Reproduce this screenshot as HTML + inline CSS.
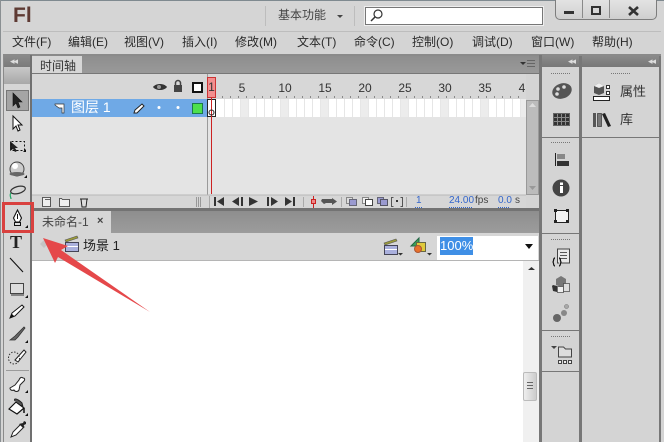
<!DOCTYPE html>
<html><head><meta charset="utf-8">
<style>
html,body{margin:0;padding:0}
body{width:664px;height:442px;overflow:hidden;position:relative;background:#d4d4d4;font-family:"Liberation Sans","WenQuanYi Zen Hei","Noto Sans CJK SC",sans-serif;font-size:12px;color:#222}
.a{position:absolute}
.t{position:absolute;white-space:nowrap;line-height:14px}
svg{position:absolute;left:0;top:0}
.m{top:35px;font-size:12px;color:#2a2a2a}
.r{top:81px;font-size:12px;color:#333;transform:translateX(-50%)}
</style></head><body>
<div class="a" style="left:0;top:0;width:664px;height:31px;background:#d5d5d5"></div>
<div class="a" style="left:0;top:0;width:664px;height:1px;background:#7f8a90"></div>
<div class="a" style="left:0;top:0;width:1px;height:442px;background:#8a8f92"></div>
<div class="a" style="left:3px;top:31px;width:658px;height:1px;background:#bdbdbd"></div>
<div class="a" style="left:3px;top:54px;width:658px;height:2px;background:#8a8a8a"></div>
<div class="a" style="left:265px;top:6px;width:1px;height:20px;background:#bdbdbd"></div>
<div class="a" style="left:354px;top:6px;width:1px;height:20px;background:#bdbdbd"></div>
<div class="t" style="left:13px;top:4px;font-size:21px;line-height:24px;font-weight:bold;color:#5e3a33">Fl</div>
<div class="t" style="left:278px;top:8px;color:#444">基本功能</div>
<div class="a" style="left:337px;top:15px;width:0;height:0;border:3px solid transparent;border-top:3px solid #444"></div>
<div class="a" style="left:365px;top:7px;width:176px;height:16px;background:#fff;border:1px solid #777;box-shadow:0 0 0 1px #eee"></div>
<svg width="664" height="442" style="z-index:1"><circle cx="378" cy="14" r="4" fill="none" stroke="#333" stroke-width="1.2"/><path d="M375 17l-4 4" stroke="#333" stroke-width="1.5"/></svg>
<div class="a" style="left:555px;top:-2px;width:100px;height:20px;background:linear-gradient(#e4e4e4,#cfcfcf);border:1px solid #7d7d7d;border-radius:0 0 5px 5px"></div>
<div class="a" style="left:582px;top:0;width:1px;height:18px;background:#8a8a8a"></div>
<div class="a" style="left:609px;top:0;width:1px;height:18px;background:#8a8a8a"></div>
<div class="a" style="left:564px;top:11px;width:10px;height:3px;background:#333"></div>
<div class="a" style="left:591px;top:6px;width:6px;height:5px;border:2px solid #333"></div>
<svg width="664" height="442" style="z-index:1"><path d="M629 7l9 8M638 7l-9 8" stroke="#333" stroke-width="2.600"/></svg>

<div class="t m" style="left:12px">文件(F)</div>
<div class="t m" style="left:68px">编辑(E)</div>
<div class="t m" style="left:124px">视图(V)</div>
<div class="t m" style="left:182px">插入(I)</div>
<div class="t m" style="left:235px">修改(M)</div>
<div class="t m" style="left:297px">文本(T)</div>
<div class="t m" style="left:354px">命令(C)</div>
<div class="t m" style="left:412px">控制(O)</div>
<div class="t m" style="left:472px">调试(D)</div>
<div class="t m" style="left:531px">窗口(W)</div>
<div class="t m" style="left:592px">帮助(H)</div>

<!-- toolbar -->
<div class="a" style="left:3px;top:55px;width:1px;height:387px;background:#8a8a8a"></div>
<div class="a" style="left:4px;top:56px;width:26px;height:11px;background:linear-gradient(#8a8a8a,#7a7a7a)"></div>
<div class="a" style="left:4px;top:67px;width:26px;height:17px;background:linear-gradient(#c8c8c8,#a8a8a8)"></div>
<div class="a" style="left:4px;top:84px;width:26px;height:358px;background:#d6d6d6"></div>
<div class="a" style="left:30px;top:55px;width:2px;height:387px;background:#707070"></div>
<div class="t" style="left:10px;top:55px;font-size:9px;color:#ddd;line-height:12px;letter-spacing:-1px">◂◂</div>
<div class="a" style="left:6px;top:90px;width:21px;height:19px;background:#a5a5a5;border:1px solid #777"></div>
<div class="a" style="left:6px;top:370px;width:23px;height:1px;background:#9b9b9b"></div>

<!-- timeline -->
<div class="a" style="left:32px;top:56px;width:507px;height:17px;background:linear-gradient(#8e8e8e,#999)"></div>
<div class="a" style="left:32px;top:56px;width:50px;height:17px;background:#d6d6d6"></div>
<div class="t" style="left:40px;top:59px;color:#333">时间轴</div>
<div class="a" style="left:32px;top:73px;width:507px;height:1px;background:#777"></div>
<div class="a" style="left:32px;top:74px;width:494px;height:25px;background:#d7d7d7"></div>
<div class="a" style="left:32px;top:99px;width:175px;height:18px;background:#6fa9e6"></div>
<div class="a" style="left:32px;top:117px;width:494px;height:78px;background:#e4e4e4"></div>
<div class="a" style="left:207px;top:74px;width:1px;height:122px;background:#9a9a9a"></div>
<div class="a" style="left:208px;top:99px;width:318px;height:18px;background:#fff"></div>
<div class="t" style="left:71px;top:100px;color:#fff;font-size:14px;line-height:15px">图层 1</div>
<div class="t r" style="left:242px">5</div>
<div class="t r" style="left:285px">10</div>
<div class="t r" style="left:325px">15</div>
<div class="t r" style="left:365px">20</div>
<div class="t r" style="left:405px">25</div>
<div class="t r" style="left:445px">30</div>
<div class="t r" style="left:485px">35</div>
<div class="t r" style="left:522px">4</div>

<svg width="664" height="442" style="z-index:2">
<!-- frame cells -->
<g fill="#ececec"><rect x="240" y="99" width="8" height="18"/><rect x="280" y="99" width="8" height="18"/><rect x="320" y="99" width="8" height="18"/><rect x="360" y="99" width="8" height="18"/><rect x="400" y="99" width="8" height="18"/><rect x="440" y="99" width="8" height="18"/><rect x="480" y="99" width="8" height="18"/><rect x="520" y="99" width="6" height="18"/></g>
<path d="M224.500 99v18M232.500 99v18M240.500 99v18M248.500 99v18M256.500 99v18M264.500 99v18M272.500 99v18M280.500 99v18M288.500 99v18M296.500 99v18M304.500 99v18M312.500 99v18M320.500 99v18M328.500 99v18M336.500 99v18M344.500 99v18M352.500 99v18M360.500 99v18M368.500 99v18M376.500 99v18M384.500 99v18M392.500 99v18M400.500 99v18M408.500 99v18M416.500 99v18M424.500 99v18M432.500 99v18M440.500 99v18M448.500 99v18M456.500 99v18M464.500 99v18M472.500 99v18M480.500 99v18M488.500 99v18M496.500 99v18M504.500 99v18M512.500 99v18M520.500 99v18" stroke="#e6e6e6" stroke-width="1"/>
<path d="M222.500 96v2M230.500 96v2M238.500 96v2M246.500 96v2M254.500 96v2M262.500 96v2M270.500 96v2M278.500 96v2M286.500 96v2M294.500 96v2M302.500 96v2M310.500 96v2M318.500 96v2M326.500 96v2M334.500 96v2M342.500 96v2M350.500 96v2M358.500 96v2M366.500 96v2M374.500 96v2M382.500 96v2M390.500 96v2M398.500 96v2M406.500 96v2M414.500 96v2M422.500 96v2M430.500 96v2M438.500 96v2M446.500 96v2M454.500 96v2M462.500 96v2M470.500 96v2M478.500 96v2M486.500 96v2M494.500 96v2M502.500 96v2M510.500 96v2M518.500 96v2" stroke="#888"/>
<rect x="207.500" y="99.500" width="8" height="17" fill="#fff" stroke="#222"/>
<!-- playhead -->
<rect x="207.500" y="77.500" width="8" height="20" fill="#f28f8f" stroke="#c33"/>
<text x="211.500" y="91" font-size="12" text-anchor="middle" fill="#333" font-family="Liberation Sans">1</text>
<path d="M211.500 98V194" stroke="#c22" stroke-width="1"/>
<circle cx="211.500" cy="112.500" r="2.500" fill="none" stroke="#222"/>
<!-- header icons -->
<path d="M153 87c3-4 11-4 14 0c-3 4-11 4-14 0z" fill="#333"/><circle cx="159" cy="87" r="2" fill="#999"/>
<rect x="174" y="85" width="8" height="7" fill="#444"/><path d="M175.500 85v-2a2.500 2.500 0 0 1 5 0v2" fill="none" stroke="#444" stroke-width="1.500"/>
<rect x="193" y="83" width="9" height="9" fill="#fff" stroke="#111" stroke-width="2"/>
<!-- layer row icons -->
<path d="M55 104h9v9h-2v-5h-3l-4-3z" fill="#fff" stroke="#333" stroke-width=".7"/>
<path d="M134 113l1-3 7-6 2 2-7 7z" fill="#fff" stroke="#222"/>
<circle cx="159" cy="107.500" r="1.500" fill="#fff"/><circle cx="178" cy="107.500" r="1.500" fill="#fff"/>
<rect x="192.500" y="103.500" width="10" height="10" fill="#4de04d" stroke="#1a7a4a"/>
<!-- timeline menu -->
<path d="M520 62h6l-3 3z" fill="#333"/><path d="M527 60.500h8M527 63.500h8M527 66.500h8" stroke="#666"/>
<!-- timeline bottom -->
<rect x="32" y="195" width="494" height="13" fill="#d6d6d6"/>
<path d="M32 195h494" stroke="#b8b8b8"/>
<path d="M42.500 197.500h8v9h-8zM45 199.500h5" fill="#eee" stroke="#333" stroke-width=".8"/>
<path d="M59.500 198.500h2l1 1h7v7h-10z" fill="#f0f0f0" stroke="#333" stroke-width=".8"/>
<path d="M80 199h8M81 199l1 8h4l1-8" fill="#ddd" stroke="#222"/>
<path d="M196.500 197v10M198.500 197v10M200.500 197v10" stroke="#999"/><path d="M209.500 196v12" stroke="#aaa"/>
<g fill="#333"><path d="M214 197h2v9h-2zM224 197v9l-7-4.500z"/><path d="M239 197v9l-7-4.500zM241 197h2v9h-2z"/><path d="M249 197l9 4.500-9 4.500z"/><path d="M267 197h2v9h-2zM271 197l7 4.500-7 4.500z"/><path d="M285 197l7 4.500-7 4.500zM293 197h2v9h-2z"/></g>
<path d="M303.500 197v10M341.500 197v10M406.500 197v10" stroke="#aaa"/>
<path d="M313.500 196v12" stroke="#c22"/><rect x="311.500" y="199.500" width="4" height="4" fill="#e88" stroke="#c22"/>
<path d="M322 199h10v-1l5 3.500-5 3.500v-2h-6l-2 1-3-3z" fill="#555"/>
<rect x="346.500" y="197.500" width="6" height="6" fill="#ddd" stroke="#888"/><rect x="349.500" y="199.500" width="7" height="6" fill="#9a9ad0" stroke="#667"/>
<rect x="362.500" y="197.500" width="6" height="6" fill="#eee" stroke="#888"/><rect x="365.500" y="199.500" width="7" height="6" fill="#fff" stroke="#444"/>
<rect x="377.500" y="197.500" width="6" height="6" fill="#9a9ad0" stroke="#667"/><rect x="380.500" y="199.500" width="7" height="6" fill="#9a9ad0" stroke="#556"/>
<path d="M393.500 197.500h-2v9h2M400.500 197.500h2v9h-2" fill="none" stroke="#555"/><rect x="396" y="200" width="2" height="2" fill="#333"/>
<path d="M415 207.500h7M449 207.500h24M498 207.500h12" stroke="#36c" stroke-dasharray="1 1"/>
<!-- timeline scrollbar -->
<rect x="526.500" y="100.500" width="12" height="94" fill="#bcbcbc" stroke="#999"/>
<path d="M529 107h7l-3.500-4z" fill="#ddd"/><path d="M529 186h7l-3.500 4z" fill="#999"/>
</svg>
<div class="t" style="left:416px;top:195px;font-size:10px;line-height:12px;color:#36c;z-index:3">1</div>
<div class="t" style="left:449px;top:195px;font-size:10px;line-height:12px;color:#36c;z-index:3">24.00</div>
<div class="t" style="left:475px;top:195px;font-size:10px;line-height:12px;color:#444;z-index:3">fps</div>
<div class="t" style="left:498px;top:195px;font-size:10px;line-height:12px;color:#36c;z-index:3">0.0</div>
<div class="t" style="left:515px;top:195px;font-size:10px;line-height:12px;color:#444;z-index:3">s</div>

<!-- document -->
<div class="a" style="left:32px;top:208px;width:507px;height:3px;background:#737373"></div>
<div class="a" style="left:32px;top:211px;width:507px;height:22px;background:linear-gradient(#8e8e8e,#9c9c9c)"></div>
<div class="a" style="left:32px;top:211px;width:79px;height:22px;background:#d6d6d6"></div>
<div class="t" style="left:42px;top:215px;color:#444">未命名-1</div>
<div class="t" style="left:97px;top:214px;font-size:11px;color:#444;font-weight:bold">×</div>
<div class="a" style="left:32px;top:233px;width:507px;height:27px;background:#d6d6d6"></div>
<div class="a" style="left:32px;top:260px;width:507px;height:2px;background:#b5b5b5"></div>
<div class="a" style="left:32px;top:261px;width:491px;height:181px;background:#fff"></div>
<div class="a" style="left:523px;top:261px;width:16px;height:181px;background:#f0f0f0"></div>
<div class="a" style="left:523px;top:372px;width:12px;height:27px;background:linear-gradient(90deg,#eee,#ccc);border:1px solid #bbb;border-radius:2px"></div>
<div class="t" style="left:83px;top:239px;font-size:13px;color:#222">场景 1</div>
<div class="a" style="left:437px;top:236px;width:101px;height:24px;background:#fff"></div>
<div class="t" style="left:440px;top:237px;height:18px;line-height:18px;font-size:13px;background:#3f8fe6;color:#fff">100%</div>
<div class="a" style="left:525px;top:244px;width:0;height:0;border:4px solid transparent;border-top:5px solid #111"></div>

<!-- right panels -->
<div class="a" style="left:539px;top:55px;width:3px;height:387px;background:#777"></div>
<div class="a" style="left:542px;top:56px;width:118px;height:11px;background:linear-gradient(#8a8a8a,#777)"></div>
<div class="a" style="left:579px;top:56px;width:3px;height:386px;background:#777"></div>
<div class="a" style="left:659px;top:56px;width:2px;height:386px;background:#777"></div>
<div class="a" style="left:542px;top:137px;width:118px;height:1px;background:#777"></div>
<div class="a" style="left:542px;top:233px;width:37px;height:1px;background:#777"></div>
<div class="a" style="left:542px;top:330px;width:37px;height:1px;background:#777"></div>
<div class="a" style="left:542px;top:371px;width:37px;height:1px;background:#777"></div>
<div class="t" style="left:620px;top:85px;font-size:13px;color:#333;z-index:3">属性</div>
<div class="t" style="left:620px;top:113px;font-size:13px;color:#333;z-index:3">库</div>
<div class="t" style="left:568px;top:55px;font-size:9px;line-height:12px;color:#ddd;letter-spacing:-1px">◂◂</div>
<div class="t" style="left:648px;top:55px;font-size:9px;line-height:12px;color:#ddd;letter-spacing:-1px">◂◂</div>

<svg width="664" height="442" style="z-index:4">
<!-- grips -->
<g stroke="#777" stroke-dasharray="1 1"><path d="M551 73.500h20M611 73.500h20M551 142.500h20M551 239.500h20M551 336.500h20"/></g>
<!-- palette -->
<ellipse cx="562" cy="91" rx="10" ry="7.500" fill="#555" transform="rotate(-20 562 91)"/><circle cx="558" cy="89" r="1.800" fill="#ddd"/><circle cx="564" cy="87" r="1.800" fill="#ddd"/><circle cx="557" cy="94" r="1.800" fill="#ddd"/>
<!-- swatches -->
<rect x="553.500" y="113.500" width="16" height="12" fill="#333" stroke="#666"/><path d="M557.500 114v11M561.500 114v11M565.500 114v11M554 117.500h15M554 121.500h15" stroke="#8a8a8a"/>
<!-- align -->
<path d="M555.500 153v13" stroke="#222"/><rect x="557" y="154" width="8" height="5" fill="#888"/><rect x="557" y="161" width="12" height="5" fill="#333"/>
<!-- info -->
<circle cx="561" cy="188" r="8.500" fill="#444"/><rect x="560" y="186" width="3" height="7" fill="#fff"/><rect x="560" y="182.500" width="3" height="2.500" fill="#fff"/>
<!-- transform -->
<rect x="555.500" y="210.500" width="13" height="12" fill="#f3f3f3" stroke="#222"/><g fill="#222"><rect x="554" y="209" width="3" height="3"/><rect x="566" y="209" width="3" height="3"/><rect x="554" y="220" width="3" height="3"/><rect x="566" y="220" width="3" height="3"/></g>
<!-- actions -->
<rect x="557.500" y="249" width="12" height="14" fill="#e8e8e8" stroke="#444"/><path d="M560 252.500h7M560 255.500h7M560 258.500h7" stroke="#555"/>
<path d="M555 258c-2 0-1 3-2 4c1 1 0 4 2 4M559 258c2 0 1 3 2 4c-1 1 0 4-2 4" fill="#d6d6d6" stroke="#111" stroke-width="1.200"/>
<!-- components -->
<path d="M556 279l5-3 5 3v6l-5 2-5-2z" fill="#777"/><path d="M553 285l4 1v6l-4-1-1-5z" fill="#333"/><rect x="557.500" y="286.500" width="6" height="6" fill="#eee" stroke="#444" stroke-width=".7"/><rect x="563.500" y="283.500" width="6" height="8" fill="#ddd" stroke="#444" stroke-width=".7"/>
<!-- dots -->
<circle cx="557" cy="318" r="4" fill="#666"/><circle cx="564" cy="313" r="3" fill="#888"/><circle cx="566.500" cy="306.500" r="2" fill="#aaa" stroke="#777" stroke-width=".6"/>
<!-- project -->
<path d="M551 346h6l-3 3z" fill="#444"/><path d="M558.500 347h5l2 2h6v8h-13z" fill="#ddd" stroke="#444"/><path d="M558.500 360.500h3v3h-3zM563.500 360.500h3v3h-3zM568.500 360.500h3v3h-3z" fill="#eee" stroke="#444"/>
<!-- props icon -->
<path d="M594 86l5-3 5 3v7l-5 2-5-2z" fill="#555"/><path d="M594 86l5 2 5-2-5-3z" fill="#eee"/>
<rect x="606.500" y="85.500" width="3" height="3" fill="#fff" stroke="#333"/><rect x="606.500" y="91.500" width="3" height="3" fill="#fff" stroke="#333"/>
<rect x="593.500" y="96.500" width="16" height="4" fill="#fff" stroke="#222"/>
<!-- library icon -->
<rect x="593" y="113" width="3" height="14" fill="#555"/><rect x="597.500" y="113.500" width="4" height="13" fill="#777" stroke="#222" stroke-width=".6"/><path d="M602 114l3-1 6 13-3 1z" fill="#222"/>
<!-- tools -->
<path d="M13 93v13l3-3 2 5 2-1-2-5h4z" fill="#222" stroke="#111" stroke-width=".6"/>
<path d="M13 116v13l3-3 2 5 2-1-2-5h4z" fill="#fff" stroke="#111"/>
<path d="M10 141v10l3-2 2 3 2-1-2-3h3z" fill="#222"/>
<rect x="11.500" y="141.500" width="13" height="9" fill="none" stroke="#111" stroke-dasharray="2 2"/><path d="M23 152l3 0 0-3z" fill="#111"/>
<circle cx="17" cy="169" r="7" fill="#ccc" stroke="#444"/><circle cx="15" cy="166" r="3" fill="#fff"/><ellipse cx="17" cy="174" rx="7.500" ry="2" fill="#666"/><path d="M24 178h3v-3z" fill="#111"/>
<ellipse cx="18" cy="190" rx="7.500" ry="3.500" fill="#d6d6d6" stroke="#333" stroke-width="1.200" transform="rotate(-15 18 190)"/><path d="M11 193c-2 2 0 4 0 6" fill="none" stroke="#2a6" stroke-width="1.200"/>
<!-- pen -->
<path d="M17.500 210l4 8-2 4h-4l-2-4z" fill="#fff" stroke="#111" stroke-width="1.100"/><path d="M17.500 214v5" stroke="#111"/><rect x="14.500" y="222.500" width="6" height="3" fill="#ddd" stroke="#111"/><path d="M25 228h3v-3z" fill="#111"/>
<path d="M10 258l13 14" stroke="#111" stroke-width="1.100"/>
<rect x="10.500" y="283.500" width="13" height="10" fill="#ddd" stroke="#444"/><path d="M11 295h13" stroke="#333"/><path d="M25 298h3v-3z" fill="#111"/>
<path d="M10 318l2-5 10-8 2 2-9 9z" fill="#fff" stroke="#111"/><path d="M10 318l2-4 2 2z" fill="#111"/>
<path d="M10 340l5-4 9-9 1 1-7 9-3 3z" fill="#666" stroke="#333" stroke-width=".8"/><path d="M25 343h3v-3z" fill="#111"/>
<path d="M15 360l9-10 2 2-8 10z" fill="#fff" stroke="#222"/><g fill="none" stroke="#333" stroke-dasharray="1.500 1.500"><ellipse cx="14" cy="358" rx="5.500" ry="6"/></g>
<path d="M10 388l5-3 4-5c1-3 3-3 4-2 2 0 2 2 1 3l-4 4-1 5c-1 2-4 2-5 0c-2 1-4 0-4-2z" fill="#fff" stroke="#222" stroke-width="1"/><path d="M25 393h3v-3z" fill="#111"/>
<path d="M9 409l7-7 8 6-7 6z" fill="#fff" stroke="#111" stroke-width="1.200"/><path d="M15 401c-2-3 2-3 7 2l1 4-2-2" fill="#555" stroke="#222"/><path d="M24 408v5" stroke="#111" stroke-width="1.500"/><path d="M25 416h3v-3z" fill="#111"/>
<path d="M11 437l2-5 8-8 3 3-8 8z" fill="#fff" stroke="#222"/><path d="M19 424l4-1 1-2 2 1 0 2-2 1-1 3z" fill="#222"/>
<!-- scene bar icons -->
<path d="M40 244l4-4 4 4-4 4z" fill="#c4c4c4"/>
<path d="M65 240l12-4 1 2-12 4z" fill="#9a9a3a" stroke="#555" stroke-width=".6"/><rect x="65.500" y="242.500" width="13" height="9" fill="#aab0dd" stroke="#445"/><path d="M65 246.500h13" stroke="#fff"/>
<path d="M384 243l12-4 1 2-12 4z" fill="#9a9a3a" stroke="#555" stroke-width=".6"/><rect x="384.500" y="245.500" width="13" height="9" fill="#aab0dd" stroke="#445"/><path d="M385 249.500h12" stroke="#fff"/>
<path d="M398 253h5l-2.500 2.500z" fill="#333"/>
<path d="M411 246l8-8v8z" fill="#3ca45a" stroke="#264"/><rect x="416.500" y="242.500" width="9" height="9" fill="#e0c93a" stroke="#664"/><circle cx="418" cy="249" r="3.500" fill="#e8702a" stroke="#a53"/>
<path d="M427 253h5l-2.500 2.500z" fill="#333"/>
<!-- doc scroll -->
<path d="M528 270h7l-3.500-3z" fill="#333"/>
<path d="M527 382.500h6M527 385.500h6M527 388.500h6" stroke="#666"/>
<!-- red box and arrow -->
<rect x="3.500" y="203.500" width="29" height="28" fill="none" stroke="#d9413f" stroke-width="3"/>
<path d="M43 238L68 246L61 250L150 312L58 257L55 263Z" fill="#e5484a"/>
</svg>
<div class="t" style="left:10px;top:233px;font-size:18px;line-height:18px;font-weight:bold;font-family:'Liberation Serif',serif;color:#222;z-index:5">T</div>
</body></html>
